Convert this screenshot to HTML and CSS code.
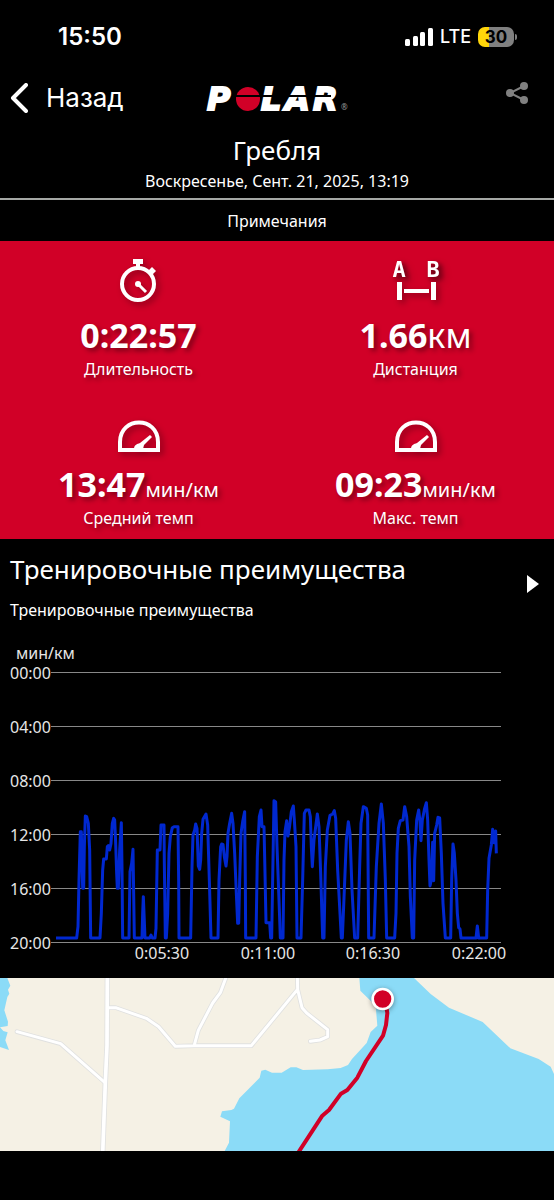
FILE: index.html
```html
<!DOCTYPE html>
<html lang="ru">
<head>
    <meta charset="UTF-8">
    <meta name="viewport" content="width=device-width, initial-scale=1.0">
    <title>Гребля</title>
    <link rel="stylesheet" href="styles.css">
</head>
<body>
    <!-- Status bar -->
    <div class="status-bar">
        <span class="clock">15:50</span>
        <div class="status-icons">
            <svg class="signal" width="28" height="18" viewBox="0 0 28 18">
                <rect x="0" y="11" width="5" height="7" rx="1.5"/>
                <rect x="8" y="8" width="5" height="10" rx="1.5"/>
                <rect x="15" y="4" width="5" height="14" rx="1.5"/>
                <rect x="23" y="0" width="5" height="18" rx="1.5"/>
            </svg>
            <span class="network">LTE</span>
            <span class="battery">30</span>
        </div>
    </div>

    <!-- Header -->
    <header class="top-bar">
        <button class="back">
            <svg width="18" height="30" viewBox="0 0 18 30"><path d="M16 2 L3 15 L16 28"/></svg>
            Назад
        </button>
        <svg class="logo" width="144" height="26" viewBox="0 0 144 26" role="img" aria-label="Polar">
            <text class="logo-text" x="2" y="25">P</text>
            <circle cx="43" cy="14" r="12" fill="#d10027"/>
            <text class="logo-text" x="56" y="25">L</text>
            <text class="logo-text" x="80" y="25">A</text>
            <text class="logo-text" x="108" y="25">R</text>
            <rect x="30" y="10" width="96" height="2" fill="#000"/>
            <text class="logo-reg" x="136" y="25">®</text>
        </svg>
        <button class="share" aria-label="Поделиться">
            <svg width="22" height="22" viewBox="0 0 22 22">
                <path d="M18 4 L4 11 L18 18" fill="none" stroke="#808080" stroke-width="2"/>
                <circle cx="18" cy="4" r="4"/>
                <circle cx="4" cy="11" r="4"/>
                <circle cx="18" cy="18" r="4"/>
            </svg>
        </button>
    </header>

    <div class="title">
        <h1>Гребля</h1>
        <p>Воскресенье, Сент. 21, 2025, 13:19</p>
    </div>
    <button class="notes">Примечания</button>

    <!-- Summary -->
    <div class="stats">
        <div class="stat">
            <svg width="42" height="46" viewBox="0 0 42 46">
                <circle cx="20" cy="26" r="16" fill="none" stroke="#fff" stroke-width="4"/>
                <path d="M15 1 H25 V6 H22 V10 H18 V6 H15 Z M30 13 L34 9 L38 13 L34 17 Z"/>
                <circle cx="20" cy="26" r="3"/>
                <path d="M20 26 L28 34" stroke="#fff" stroke-width="3"/>
            </svg>
            <div class="value">0:22:57</div>
            <div class="label">Длительность</div>
        </div>
        <div class="stat">
            <svg width="48" height="46" viewBox="0 0 48 46">
                <text class="ab" x="7" y="19">A</text>
                <text class="ab" x="41" y="19">B</text>
                <path d="M5 24 H10 V42 H5 Z M12 31 H37 V35 H12 Z M39 24 H44 V42 H39 Z"/>
            </svg>
            <div class="value">1.66<span class="unit-big">км</span></div>
            <div class="label">Дистанция</div>
        </div>
        <div class="stat">
            <svg width="42" height="46" viewBox="0 0 42 46">
                <path d="M2 43 V35 C2 9 40 9 40 35 V43 Z" fill="none" stroke="#fff" stroke-width="4"/>
                <path d="M16 42 C16 38 19 37 22 36 L32 28 L34 30 L26 38 L25 42 Z"/>
            </svg>
            <div class="value">13:47<span class="unit">мин/км</span></div>
            <div class="label">Средний темп</div>
        </div>
        <div class="stat">
            <svg width="42" height="46" viewBox="0 0 42 46">
                <path d="M2 43 V35 C2 9 40 9 40 35 V43 Z" fill="none" stroke="#fff" stroke-width="4"/>
                <path d="M16 42 C16 38 19 37 22 36 L32 28 L34 30 L26 38 L25 42 Z"/>
            </svg>
            <div class="value">09:23<span class="unit">мин/км</span></div>
            <div class="label">Макс. темп</div>
        </div>
    </div>

    <!-- Training benefit -->
    <div class="benefit">
        <div>
            <h2>Тренировочные преимущества</h2>
            <p>Тренировочные преимущества</p>
        </div>
        <button class="play" aria-label="Открыть">
            <svg width="12" height="18" viewBox="0 0 12 18"><path d="M0 0 L12 9 L0 18 Z"/></svg>
        </button>
    </div>

    <!-- Pace chart -->
    <svg class="chart" viewBox="0 0 554 338">
        <g class="axis">
            <text x="16" y="19">мин/км</text>
            <text x="10" y="39">00:00</text>
            <text x="10" y="93">04:00</text>
            <text x="10" y="147">08:00</text>
            <text x="10" y="201">12:00</text>
            <text x="10" y="255">16:00</text>
            <text x="10" y="309">20:00</text>
        </g>
        <path class="grid" d="M51 32.5 H501 M51 86.5 H501 M51 140.5 H501 M51 194.5 H501 M51 248.5 H501 M51 302.5 H501"/>
        <svg x="40" y="140" width="480" height="200" viewBox="0 0 1440 600">
            <polyline class="pace" points="48,474 110,474 114,440 117,300 121,155 124,155 126,250 128,325 131,325 133,200 136,108 140,110 145,130 149,210 152,474 180,474 184,400 188,270 191,237 199,237 202,200 205,197 209,210 213,190 217,130 221,115 224,120 227,190 230,280 232,325 235,325 239,210 244,128 246,260 248,474 267,474 270,275 275,250 279,208 283,474 306,474 308,400 310,350 315,474 329,474 333,465 337,474 345,474 348,445 352,210 360,210 363,135 372,135 373,250 376,474 379,474 383,400 387,220 391,170 397,143 402,140 414,140 416,300 417,474 452,474 456,260 459,165 464,150 467,132 471,145 475,258 479,268 482,240 485,160 489,118 498,102 503,135 508,300 513,474 534,474 537,300 542,200 545,192 549,193 553,230 558,258 561,230 564,160 569,130 575,100 579,130 584,220 589,340 593,430 596,430 599,300 603,160 608,125 614,95 616,300 617,474 648,474 652,230 658,110 663,90 666,140 672,140 675,280 678,428 689,428 692,474 695,474 702,62 707,66 711,200 717,360 721,474 729,474 732,240 735,155 740,122 744,168 748,145 754,95 760,78 763,120 768,200 771,474 783,474 788,300 793,100 798,90 807,90 811,110 814,200 817,260 822,180 832,102 837,140 842,280 848,474 852,474 856,260 862,150 870,106 878,102 883,92 887,115 893,270 904,474 907,474 913,330 919,180 925,125 930,160 936,330 944,474 953,474 959,260 963,130 970,80 979,85 983,105 986,474 1002,474 1009,260 1017,130 1024,72 1030,130 1036,300 1040,474 1064,474 1068,400 1071,220 1075,145 1081,122 1089,120 1094,80 1100,110 1107,200 1111,350 1117,474 1121,474 1124,240 1130,120 1136,90 1140,125 1143,182 1147,120 1154,85 1159,68 1163,120 1167,240 1170,318 1174,300 1178,187 1181,302 1184,160 1190,135 1194,112 1199,114 1204,220 1209,370 1216,474 1232,474 1235,300 1239,192 1243,220 1248,300 1252,400 1256,443 1260,447 1263,474 1308,474 1312,438 1316,474 1340,474 1343,330 1347,235 1354,195 1358,148 1362,188 1367,153 1369,220"/>
        </svg>
        <g class="axis axis-x">
            <text x="162" y="319">0:05:30</text>
            <text x="268" y="319">0:11:00</text>
            <text x="373" y="319">0:16:30</text>
            <text x="479" y="319">0:22:00</text>
        </g>
    </svg>

    <!-- Route map -->
    <svg class="map" viewBox="0 27 1662 519">
        <rect y="27" width="1662" height="519" fill="#f5f1e5"/>
        <g class="water">
            <path d="M0 27 H22 L31 50 L24 62 L28 74 L22 84 L13 124 L24 158 L23 171 L0 175 L10 186 L23 190 L16 214 L27 243 L0 234 Z"/>
            <path d="M1078 27 L1081 65 L1127 110 L1132 170 L1112 189 L1100 222 L1056 270 L1044 288 L1022 297 L983 301 L909 303 L889 295 L872 295 L845 311 L816 311 L796 302 L784 305 L779 326 L718 388 L702 419 L694 423 L666 427 L661 443 L690 457 L687 521 L674 546 H1662 V315 L1652 293 L1616 270 L1531 238 L1448 159 L1347 116 L1292 75 L1242 27 Z"/>
        </g>
        <g class="roads" stroke="#e0e1e0">
            <path stroke-width="16" d="M322 20 L321 230 L316 340 L308 555"/>
            <path stroke-width="14" d="M51 188 L182 224 L314 340 M322 116 L347 116 L439 148 L476 173 L526 232 L583 230 H754 L892 62 M680 20 L661 71 L638 102 L595 184 L583 228 M892 20 L893 62 L906 116 L920 132 L983 182 V203 L960 213 L931 217"/>
        </g>
        <g class="roads" stroke="#fff">
            <path stroke-width="11" d="M322 20 L321 230 L316 340 L308 555"/>
            <path stroke-width="9" d="M51 188 L182 224 L314 340 M322 116 L347 116 L439 148 L476 173 L526 232 L583 230 H754 L892 62 M680 20 L661 71 L638 102 L595 184 L583 228 M892 20 L893 62 L906 116 L920 132 L983 182 V203 L960 213 L931 217"/>
        </g>
        <path class="route" d="M1158 108 L1162 132 L1158 168 L1149 200 L1098 276 L1072 326 L1042 363 L1023 374 L987 423 L967 440 L892 555"/>
        <circle class="pin" cx="1148" cy="90" r="30"/>
    </svg>
</body>
</html>
```

FILE: styles.css
```css
* { box-sizing: border-box; }
body { margin: 0; background: #000; color: #fff; font-family: "Noto Sans", "Open Sans", sans-serif; font-size: 16px; line-height: 22px; }
h1, h2, p { margin: 0; font-weight: 400; }
h1, h2 { font-size: 26px; line-height: 36px; }
button { background: none; border: 0; padding: 0; color: inherit; font: inherit; cursor: pointer; }
svg { display: block; fill: #fff; }

.status-bar { display: flex; justify-content: space-between; align-items: center; height: 74px; padding: 0 40px 0 58px; font-family: Inter, sans-serif; }
.clock { font-size: 24px; font-weight: 600; }
.status-icons { display: flex; align-items: center; gap: 7px; }
.network { font-size: 18px; font-weight: 500; }
.battery { position: relative; width: 36px; height: 20px; border-radius: 7px; background: linear-gradient(90deg, #ffd60a 11px, #808080 11px); color: #000; font-size: 17px; font-weight: 700; line-height: 20px; text-align: center; }
.battery::after { content: ""; position: absolute; left: 37px; top: 7px; width: 2px; height: 6px; border-radius: 0 2px 2px 0; background: #808080; }

.top-bar { display: grid; grid-template-columns: 1fr auto 1fr; align-items: center; height: 48px; padding: 0 10px; }
.back { display: flex; align-items: center; gap: 18px; font-family: Inter, sans-serif; font-size: 26px; line-height: 32px; }
.back path { fill: none; stroke: #fff; stroke-width: 4; stroke-linecap: round; stroke-linejoin: round; }
.logo { overflow: visible; }
.logo-text { font: italic bold 32px "DejaVu Sans", sans-serif; stroke: #fff; stroke-width: 2; }
.logo-reg { font-size: 8px; fill: #999; }
.share { justify-self: end; padding: 0 16px 10px 0; }
.share svg { fill: #808080; }

.title { padding: 10px 0 6px; text-align: center; border-bottom: 2px solid #a5a8a5; }
.title p { margin-top: 2px; }
.notes { display: block; width: 100%; height: 41px; }

.stats { display: grid; grid-template-columns: 1fr 1fr; background: #d10027; text-align: center; text-shadow: 3px 3px 5px rgba(0,0,0,0.4); }
.stat { height: 149px; padding-top: 17px; }
.stat svg { margin: 0 auto; overflow: visible; filter: drop-shadow(3px 3px 3px rgba(0,0,0,0.35)); }
.ab { font: bold 22px "DejaVu Sans Mono", monospace; text-anchor: middle; }
.value { font-size: 34px; font-weight: 700; line-height: 46px; margin-top: 8px; }
.unit, .unit-big { font-weight: 400; line-height: 1; }
.unit { font-size: 20px; }

.benefit { display: flex; justify-content: space-between; align-items: center; padding: 12px 15px 19px 10px; }
.benefit p { margin-top: 12px; }
.play { padding-bottom: 5px; }

.chart { width: 100%; }
.axis { font-size: 16px; fill: #e6e6e6; }
.axis-x { text-anchor: middle; }
.grid { stroke: #888; stroke-width: 1; }
.pace { fill: none; stroke: #0028d0; stroke-width: 9; stroke-linejoin: round; }

.map { width: 100%; }
.water { fill: #8bdbf7; }
.roads { fill: none; stroke-linecap: round; stroke-linejoin: round; }
.route { fill: none; stroke: #d10027; stroke-width: 12; stroke-linejoin: round; }
.pin { fill: #d10027; stroke: #fff; stroke-width: 8; filter: drop-shadow(0 4px 8px rgba(0,0,0,0.4)); }
```
